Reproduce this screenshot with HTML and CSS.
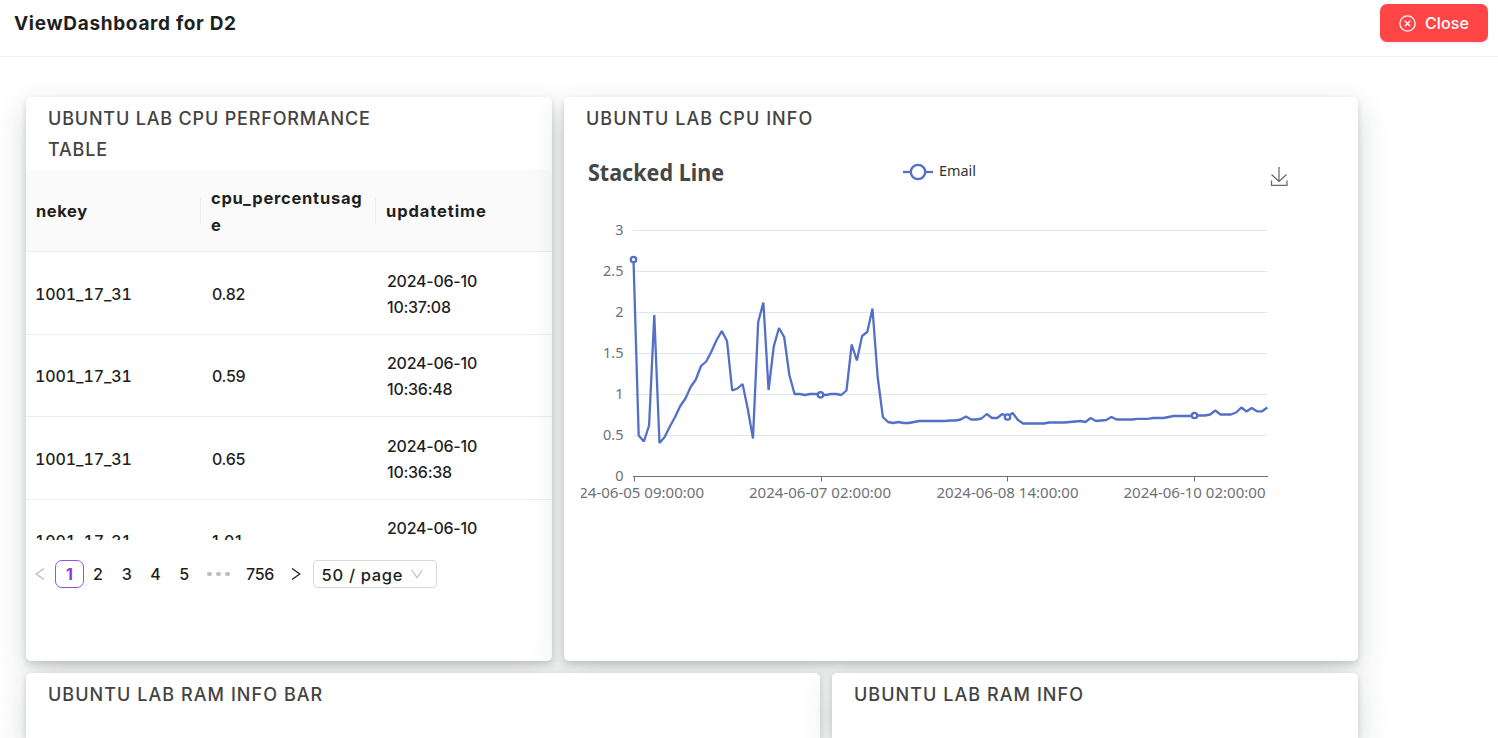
FILE: index.html
```html
<!DOCTYPE html>
<html lang="en">
<head>
<meta charset="utf-8">
<title>ViewDashboard for D2</title>
<link rel="stylesheet" href="styles.css">
</head>
<body>
<header class="topbar">
  <h1 class="topbar-title">ViewDashboard for D2</h1>
  <button class="close-btn" type="button">
    <svg class="close-icon" viewBox="0 0 16 16" width="17" height="17" fill="none" stroke="currentColor"><circle cx="8" cy="8" r="7.2" stroke-width="1.2"/><path d="M5.5 5.5l5 5M10.5 5.5l-5 5" stroke-width="1.3"/></svg>
    <span>Close</span>
  </button>
</header>
<main class="board">
  <section class="card narrow tall">
    <h2 class="card-title wrap">Ubuntu Lab CPU Performance Table</h2>
    <div class="table">
      <div class="row head">
        <div class="cell"><b class="h-nekey">nekey</b></div>
        <div class="cell"><b class="h-cpu">cpu_percentusag<br>e</b></div>
        <div class="cell"><b class="h-time">updatetime</b></div>
      </div>
      <div class="row"><div class="cell key">1001_17_31</div><div class="cell">0.82</div><div class="cell time">2024-06-10<br><span class="clock">10:37:08</span></div></div>
      <div class="row"><div class="cell key">1001_17_31</div><div class="cell">0.59</div><div class="cell time">2024-06-10<br><span class="clock">10:36:48</span></div></div>
      <div class="row"><div class="cell key">1001_17_31</div><div class="cell">0.65</div><div class="cell time">2024-06-10<br><span class="clock">10:36:38</span></div></div>
      <div class="row partial"><div class="cell key">1001_17_31</div><div class="cell usage">1.01</div><div class="cell time">2024-06-10</div></div>
    </div>
    <nav class="pager">
      <svg class="arrow off" viewBox="0 0 10 14" width="10" height="14"><path d="M9 1.5L1.2 7L9 12.5"/></svg>
      <span class="page current">1</span>
      <span class="page">2</span>
      <span class="page">3</span>
      <span class="page">4</span>
      <span class="page">5</span>
      <span class="dots"><i></i><i></i><i></i></span>
      <span class="page last">756</span>
      <svg class="arrow next" viewBox="0 0 10 14" width="10" height="14"><path d="M1 1.5L8.8 7L1 12.5"/></svg>
      <span class="size-select"><span>50 / page</span><svg viewBox="0 0 12 10" width="12" height="10"><path d="M.6 1L6 8.6L11.4 1"/></svg></span>
    </nav>
  </section>
  <section class="card wide tall">
    <h2 class="card-title info">Ubuntu Lab CPU Info</h2>
    <svg class="chart" viewBox="581 140 720 370" width="720" height="370">
      <text class="c-title" x="588" y="181" textLength="136" lengthAdjust="spacingAndGlyphs">Stacked Line</text>
      <path class="series" d="M903 172h30"/>
      <circle class="series dot" cx="918" cy="172" r="7.2"/>
      <text class="c-legend" x="939" y="176" textLength="37" lengthAdjust="spacingAndGlyphs">Email</text>
      <g class="download"><path d="M1279 167v14.5M1271.500 174.500L1279 181.500L1286.500 174.500M1271.500 180.500V185.300H1287V180.500"/></g>
      <path class="grid" d="M633 230.500H1267.500M633 271.500H1267.500M633 312.500H1267.500M633 353.500H1267.500M633 394.500H1267.500M633 435.500H1267.500"/>
      <path class="axis" d="M633 476.500H1268M634.500 476.500v5M821.500 476.500v5M1007.500 476.500v5M1194.500 476.500v5"/>
      <g class="y-label">
        <text x="623.500" y="235">3</text><text x="623.500" y="276">2.5</text><text x="623.500" y="317">2</text><text x="623.500" y="358">1.5</text><text x="623.500" y="399">1</text><text x="623.500" y="440">0.5</text><text x="623.500" y="481">0</text>
      </g>
      <g class="x-label">
        <text x="562" y="498" textLength="142" lengthAdjust="spacingAndGlyphs">2024-06-05 09:00:00</text>
        <text x="749" y="498" textLength="142" lengthAdjust="spacingAndGlyphs">2024-06-07 02:00:00</text>
        <text x="936.500" y="498" textLength="142" lengthAdjust="spacingAndGlyphs">2024-06-08 14:00:00</text>
        <text x="1123.500" y="498" textLength="142" lengthAdjust="spacingAndGlyphs">2024-06-10 02:00:00</text>
      </g>
      <polyline class="series" transform="translate(633.5 0) scale(5.195 1)" points="0,259.5 1,435.5 2,441.500 3,425.500 4,315 5,443 6,437 7,426.500 8,417 9,406 10,398.500 11,387 12,379.500 13,366 14,361.500 15,351.500 16,340 17,331 18,341 19,390.500 20,388.500 21,384 22,409 23,438.500 24,322 25,302.500 26,390 27,346.500 28,328 29,337 30,375 31,394 32,394 33,395 34,394 35,394 36,394.500 37,395 38,394 39,394 40,395 41,390.500 42,344.500 43,360.500 44,336 45,332 46,308.500 47,377 48,417 49,422 50,423 51,422 52,423 53,423 54,422 55,421 60,421 61,420.500 62,420.500 63,419.500 64,416.500 65,419.500 66,419.500 67,418.500 68,414 69,418 70,418 71,414 72,416.500 73,413 74,420 75,423.500 79,423.500 80,422.500 83,422.500 84,422 85,421.500 86,421 87,422 88,418 89,421 90,420.500 91,420 92,417 93,419.500 96,419.500 97,418.800 99,418.800 100,418 102,418 103,417 104,416 107,416 108,415.500 110,415.500 111,414.500 112,410.500 113,414.500 115,414.500 116,412.500 117,407.500 118,411.500 119,408 120,411.300 121,411.300 122,407.500"/>
      <g class="series dot"><circle cx="633.500" cy="259.500" r="2.700"/><circle cx="820.500" cy="394.800" r="2.700"/><circle cx="1007.500" cy="417" r="2.700"/><circle cx="1194.500" cy="415.500" r="2.700"/></g>
    </svg>
  </section>
  <section class="card wide low"><h2 class="card-title info">Ubuntu Lab RAM Info Bar</h2></section>
  <section class="card narrow low"><h2 class="card-title info">Ubuntu Lab RAM Info</h2></section>
</main>
</body>
</html>
```
FILE: styles.css
```css
* { box-sizing: border-box; }
body {
  margin: 0;
  height: 738px;
  overflow: hidden;
  background: #fff;
  color: #1f1f1f;
  font-family: Inter, "Open Sans", sans-serif;
}
.topbar {
  display: flex;
  justify-content: space-between;
  align-items: flex-start;
  height: 57px;
  padding: 4px 10px 0 14px;
  border-bottom: 1px solid #efefef;
}
.topbar-title { margin: 0; padding-top: 1px; font-size: 19px; line-height: 38px; font-weight: 700; letter-spacing: .68px; }
.close-btn {
  display: flex;
  align-items: center;
  gap: 9px;
  width: 108px;
  height: 38px;
  padding: 0 0 0 19px;
  border: 0;
  border-radius: 7px;
  background: #ff4545;
  box-shadow: 0 2px 0 #f5efff;
  color: #fff;
  font: 500 16px Inter, sans-serif;
  letter-spacing: .1px;
}
.board {
  display: flex;
  flex-wrap: wrap;
  gap: 12px;
  width: 1358px;
  height: 681px;
  padding: 40px 0 0 26px;
}
.card {
  padding-top: 6px;
  border-radius: 5px;
  background: #fff;
  box-shadow: 0 12px 32px rgba(35, 42, 46, .18), 0 3px 6px rgba(30, 35, 50, .17);
}
.tall { height: 564px; }
.low { height: 65px; border-radius: 5px 5px 0 0; }
.narrow { width: 526px; }
.wide { width: 794px; }
.card-title {
  margin: 0 0 0 22px;
  color: #434343;
  font-size: 18px;
  line-height: 31px;
  font-weight: 500;
  letter-spacing: .82px;
  text-transform: uppercase;
}
.info { letter-spacing: 1.05px; }
.wrap { width: 360px; margin-bottom: 5px; }
.table { height: 370px; overflow: hidden; font-size: 16px; font-weight: 500; line-height: 26.2px; }
.row { display: flex; align-items: center; height: 82.500px; border-bottom: 1px solid #eee; }
.head { height: 82px; border-radius: 8px 8px 0 0; background: #fafafa; }
.head b { font-weight: 700; font-size: 16.500px; letter-spacing: .6px; }
.head .h-cpu { letter-spacing: .75px; }
.head .h-time { letter-spacing: .9px; }
.cell { display: flex; flex-direction: column; justify-content: center; width: 175px; padding: 2px 0 0 10px; letter-spacing: -.3px; }
.cell br { display: none; }
.key { padding-left: 9px; font-variant-numeric: tabular-nums; letter-spacing: -.1px; }
.key + .cell { padding-left: 11px; }
.time { padding-left: 11px; letter-spacing: -.25px; }
.partial { align-items: flex-start; }
.partial .cell { height: 82px; }
.partial .usage { letter-spacing: .5px; }
.partial .time { height: auto; padding-top: 15px; }
.head .cell { height: 26px; border-right: 1px solid #eee; }
.head .cell:last-child { border: 0; }
.head br { display: inline; }
.pager { display: flex; align-items: center; height: 28px; margin: 20px 0 0 9px; font-size: 16px; font-weight: 500; }
.page { width: 28.700px; text-align: center; line-height: 26px; }
.current { border: 1px solid #9254de; border-radius: 7px; color: #8a35e8; font-weight: 700; }
.arrow { margin-right: 10px; fill: none; stroke: #222; stroke-width: 1.300; }
.off { stroke: #bbb; }
.dots { display: flex; gap: 4.500px; margin: 0 14px 0 9px; }
.dots i { width: 4.400px; height: 4.400px; border-radius: 50%; background: #bfbfbf; }
.last { width: 33px; letter-spacing: -.3px; }
.next { margin: 0 12px 0 14px; }
.size-select { display: flex; align-items: center; gap: 8px; width: 124px; height: 28px; padding: 2px 0 0 8px; border: 1px solid #d9d9d9; border-radius: 4px; font-size: 16.500px; letter-spacing: .68px; }
.size-select svg { margin-top: -2px; fill: none; stroke: #bfbfbf; stroke-width: 1.200; }
.chart { display: block; margin: 6px 0 0 17px; font-family: "Noto Sans", "Open Sans", sans-serif; }
.c-title { fill: #464646; font-size: 23px; font-weight: 700; }
.c-legend { fill: #333; font-size: 14.500px; }
.download { fill: none; stroke: #666; stroke-width: 1.200; }
.grid { fill: none; stroke: #e0e6f1; }
.axis { fill: none; stroke: #6e7079; }
.y-label, .x-label { fill: #6e7079; font-size: 14.500px; }
.y-label { text-anchor: end; }
.series { fill: none; stroke: #5470c6; stroke-width: 2.300; stroke-linejoin: bevel; vector-effect: non-scaling-stroke; }
.dot { fill: #fff; }
```
